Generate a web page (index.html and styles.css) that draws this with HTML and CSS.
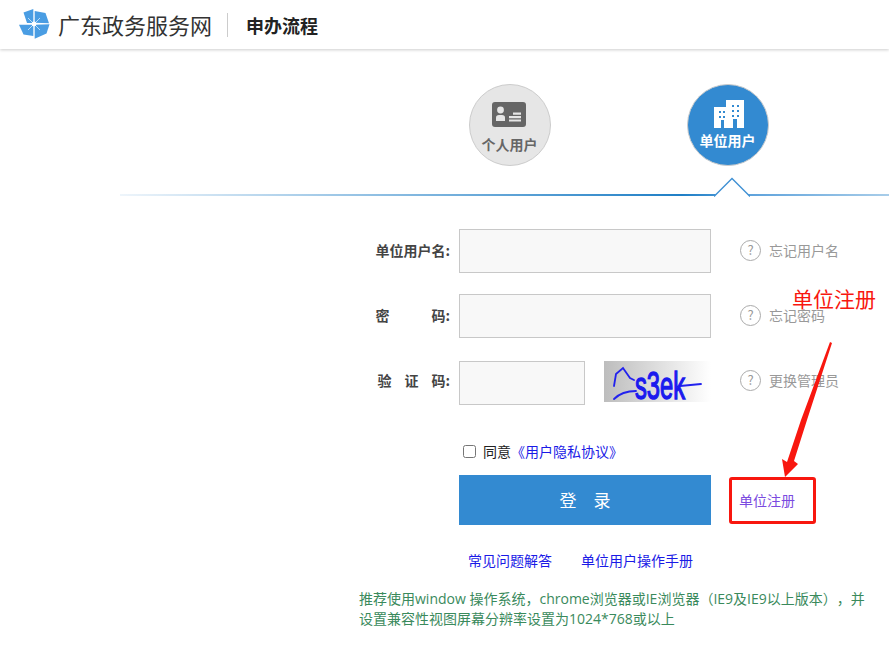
FILE: index.html
```html
<!DOCTYPE html>
<html lang="zh-CN">
<head>
<meta charset="utf-8">
<title>申办流程</title>
<link rel="stylesheet" href="styles.css">
</head>
<body>
<header class="top">
  <svg class="logo" viewBox="0 0 30 30" width="30" height="30">
    <g fill="#4a9de3">
      <polygon points="4.500,3.500 14.300,0 14.300,14 8,14"/>
      <polygon points="15.700,2 26.500,4 30,14.300 15.700,13.800"/>
      <polygon points="15.700,15.800 30.500,15.300 27.500,24.500 15.700,29.800"/>
      <polygon points="0,15.800 14.300,15.800 14.300,27 4.500,25.500"/>
    </g>
    <path d="M15 15L9 9M15 15L21 9M15 15L21 21M15 15L9 21" stroke="#b9dcf8" stroke-width="1"/>
    <circle cx="15" cy="15" r="2.400" fill="#fff"/>
  </svg>
  <span class="site">广东政务服务网</span>
  <span class="sep"></span>
  <strong class="page-title">申办流程</strong>
</header>

<main class="main">
  <div class="tabs">
    <div class="tab">
      <svg viewBox="0 0 34 25" width="34" height="25">
        <rect width="34" height="25" rx="3" fill="#666"/>
        <circle cx="8.500" cy="8" r="3.400" fill="#e6e6e6"/>
        <path d="M4 19v-3.500q0-2.500 3-2.500h3q3 0 3 2.500V19z" fill="#e6e6e6"/>
        <path d="M21 10.500h8v2.200h-8zM17 14h12v2.200H17zM17 17.500h12v2H17z" fill="#e6e6e6"/>
      </svg>
      <span>个人用户</span>
    </div>
    <div class="tab tab-on">
      <svg viewBox="0 0 30 28" width="30" height="28">
        <path fill="#fff" fill-rule="evenodd" d="M0 7h12V0h18v28H0z"/>
        <g fill="#338ad1">
          <rect x="5" y="11" width="2" height="2"/><rect x="9" y="11" width="2" height="2"/>
          <rect x="5" y="16" width="2" height="2"/><rect x="9" y="16" width="2" height="2"/>
          <rect x="18" y="5" width="2" height="2"/><rect x="23" y="5" width="2" height="2"/>
          <rect x="18" y="10" width="2" height="2"/><rect x="23" y="10" width="2" height="2"/>
          <rect x="18" y="15" width="2" height="2"/><rect x="23" y="15" width="2" height="2"/>
          <rect x="7" y="20" width="3" height="8"/><rect x="19" y="19" width="4" height="9"/>
        </g>
      </svg>
      <span>单位用户</span>
    </div>
  </div>

  <div class="rule">
    <svg class="notch" viewBox="0 0 36 20" width="36" height="20">
      <path d="M0 19.500L18 1.500L36 19.500" fill="#fff" stroke="#3d8fd3" stroke-width="1.300"/>
    </svg>
  </div>

  <form class="form">
    <div class="row row-first">
      <label class="lab">单位用户名:</label>
      <input class="inp" type="text">
      <a class="help"><i>?</i>忘记用户名</a>
    </div>
    <div class="row row-second">
      <label class="lab"><span class="wide">密</span>码:</label>
      <input class="inp" type="password">
      <a class="help"><i>?</i>忘记密码</a>
    </div>
    <div class="row row-third">
      <label class="lab"><span class="mid">验</span><span class="mid">证</span>码:</label>
      <input class="inp inp-short" type="text">
      <svg class="captcha" viewBox="0 0 107 41" width="107" height="41">
        <defs>
          <linearGradient id="cg"><stop offset="0" stop-color="#bdbdbd"/><stop offset="1" stop-color="#fff"/></linearGradient>
        </defs>
        <rect width="107" height="41" fill="url(#cg)"/>
        <g fill="none" stroke="#2222ee" stroke-width="1.800" stroke-linecap="round">
          <path d="M10 25L12 13L19 7L26 17L30 19"/>
          <path d="M10 38Q18 30 32 30"/>
          <path d="M76 25L97 23"/>
        </g>
        <text class="cap-text" x="31" y="38" textLength="50" lengthAdjust="spacingAndGlyphs">s3ek</text>
      </svg>
      <a class="help"><i>?</i>更换管理员</a>
    </div>
    <div class="agree">
      <input type="checkbox" class="chk">
      <span>同意</span><a class="blue">《用户隐私协议》</a>
    </div>
    <div class="actions">
      <button type="button" class="login">登　录</button>
      <div class="reg-box"><a class="reg">单位注册</a></div>
    </div>
    <div class="links">
      <a class="blue">常见问题解答</a>
      <a class="blue">单位用户操作手册</a>
    </div>
    <p class="note">推荐使用window 操作系统，chrome浏览器或IE浏览器（IE9及IE9以上版本），并设置兼容性视图屏幕分辨率设置为1024*768或以上</p>
  </form>
</main>

<div class="callout">单位注册</div>
<svg class="arrow" viewBox="0 0 60 140" width="60" height="140">
  <polygon points="47,0 49,1 24,78 11,119 15,122 2,135 -1,117 4,120 18,78" fill="#f8170f"/>
</svg>
</body>
</html>
```

FILE: styles.css
```css
* { box-sizing: border-box; }
html, body { margin: 0; padding: 0; }
body {
  position: relative;
  width: 889px;
  height: 645px;
  overflow: hidden;
  background: #fff;
  font-family: "Noto Sans CJK SC", "Liberation Sans", sans-serif;
  font-size: 14px;
  color: #333;
  text-spacing-trim: space-all;
}
.top {
  display: flex;
  align-items: center;
  height: 49px;
  padding-left: 19px;
  padding-top: 2px;
  background: #fff;
  box-shadow: 0 1px 3px rgba(0, 0, 0, .2);
}
.logo { margin-top: -4px; overflow: visible; }
.site { margin-left: 9px; font-size: 22px; color: #333; line-height: 28px; margin-top: -4px; }
.sep { width: 1px; height: 24px; margin: -2px 18px 0 15px; background: #ccc; }
.page-title { font-size: 18px; color: #222; font-weight: 700; margin-top: -2px; }

.tabs {
  display: flex;
  gap: 136px;
  padding: 35px 0 0 469px;
  height: 145px;
}
.tab {
  display: flex;
  flex-direction: column;
  align-items: center;
  width: 82px;
  height: 82px;
  padding-top: 17px;
  border: 1px solid #ccc;
  border-radius: 50%;
  background: #e6e6e6;
  color: #666;
  font-size: 14px;
  font-weight: 700;
}
.tab svg { margin-right: 3px; }
.tab span { line-height: 20px; margin: 7px 1px 0 0; }
.tab-on { background: #338ad1; color: #fff; padding-top: 15px; }
.tab-on svg { margin-right: 0; margin-left: 1px; }
.tab-on span { margin-top: 2px; }

.rule {
  position: relative;
  height: 2px;
  margin-left: 120px;
  background: linear-gradient(90deg, #eef5fb 0, #1f7fc6 73%, #5fa3dc 82%, #a8cde9 100%);
}
.notch { position: absolute; left: 594px; top: -17px; }

.form { padding-left: 0; }
.row { display: flex; align-items: flex-start; }
.row-first { margin-top: 33px; }
.row-second { margin-top: 21px; }
.row-third { margin-top: 23px; }
.lab {
  display: flex;
  justify-content: flex-end;
  width: 450px;
  margin-right: 9px;
  line-height: 42px;
  font-weight: 700;
  font-size: 14px;
  color: #444;
}
.row-third .lab { line-height: 39px; }
.wide { margin-right: 42px; }
.mid { margin-right: 13px; }
.inp {
  width: 252px;
  height: 44px;
  border: 1px solid #c8c8c8;
  background: #f8f8f8;
  padding: 0 8px;
  outline: none;
}
.inp-short { width: 126px; }
.captcha { margin-left: 19px; display: block; }
.cap-text { font: 400 38px "Liberation Sans", sans-serif; fill: #1a1aee; stroke: #1a1aee; stroke-width: 1.400px; }
.help {
  display: flex;
  align-items: center;
  height: 44px;
  margin-left: 29px;
  margin-top: -1px;
  color: #999;
  font-size: 14px;
}
.row-third .help { height: 40px; }
.help i {
  display: block;
  width: 21px;
  height: 21px;
  margin-right: 8px;
  border: 1.500px solid #aaa;
  border-radius: 50%;
  text-align: center;
  font-style: normal;
  line-height: 18px;
  font-size: 13px;
}
.agree {
  display: flex;
  align-items: center;
  margin: 35px 0 0 463px;
  height: 22px;
  color: #222;
}
.chk { width: 13px; height: 13px; margin: 0 7px 0 0; }
.blue { color: #1a1ae6; }
.actions { display: flex; align-items: center; margin: 13px 0 0 459px; }
.login {
  width: 252px;
  height: 50px;
  border: 0;
  padding: 0 0 2px;
  background: #338ad1;
  color: #fff;
  font: 17px "Noto Sans CJK SC", sans-serif;
}
.reg-box {
  width: 87px;
  height: 47px;
  margin-left: 18px;
  padding-left: 7px;
  border: 3px solid #f8170f;
  border-radius: 3px;
  line-height: 41px;
}
.reg { color: #7a4ae0; font-size: 14px; }
.links { display: flex; gap: 29px; margin: 24px 0 0 468px; line-height: 22px; }
.note {
  width: 512px;
  margin: 18px 0 0 359px;
  line-height: 20px;
  color: #3a8a5c;
  font-family: "Open Sans", "Noto Sans CJK SC", sans-serif;
}
.callout {
  position: absolute;
  left: 792px;
  top: 284px;
  font-size: 21px;
  line-height: 28px;
  color: #f8170f;
}
.arrow { position: absolute; left: 783px; top: 342px; overflow: visible; }
```
